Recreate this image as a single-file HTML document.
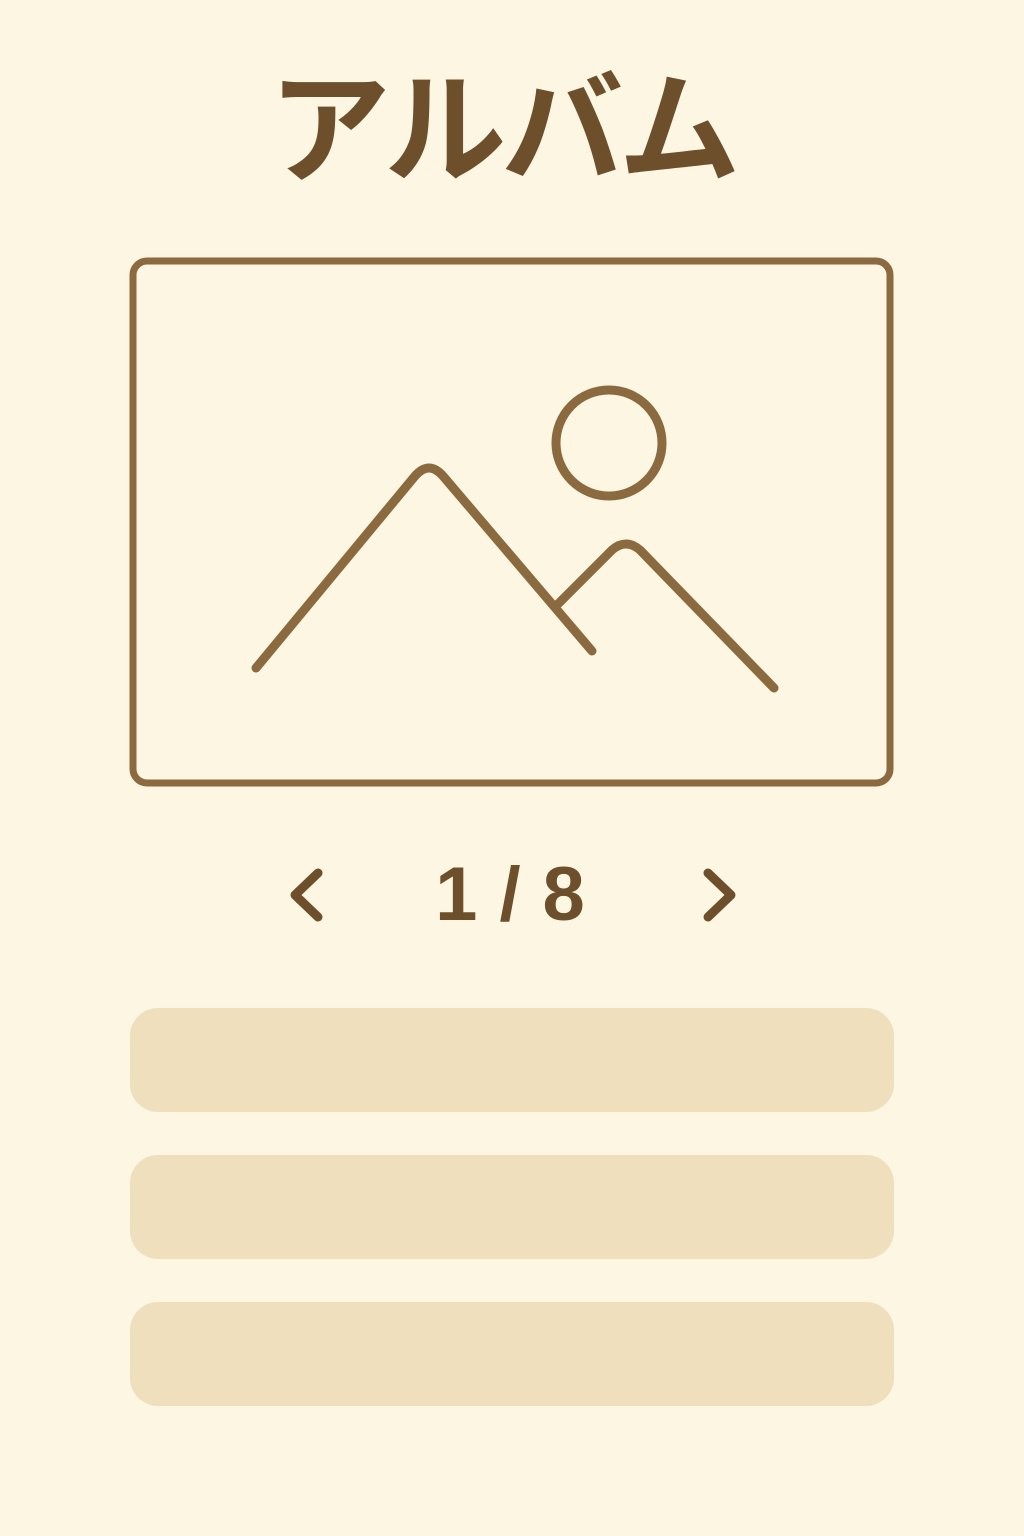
<!DOCTYPE html>
<html><head><meta charset="utf-8"><style>
html,body{margin:0;padding:0;}
body{width:1024px;height:1536px;background:#fdf6e2;position:relative;overflow:hidden;font-family:"Liberation Sans","Noto Sans CJK JP",sans-serif;}
.title{position:absolute;left:-10px;width:1024px;top:66px;text-align:center;font-size:122px;font-weight:bold;color:#6d4f2c;letter-spacing:-5px;line-height:130px;}
.bar{position:absolute;left:130px;width:764px;height:104px;border-radius:28px;background:#efdfbd;}
.pager{position:absolute;left:395px;width:230px;top:850px;text-align:center;font-size:76px;font-weight:bold;color:#6d4f2c;line-height:90px;letter-spacing:22px;padding-left:22px;box-sizing:border-box;}
</style></head><body>
<div class="title">アルバム</div>
<svg width="1024" height="1000" style="position:absolute;left:0;top:0" fill="none" stroke="#8b6a40" stroke-linecap="round" stroke-linejoin="round">
<rect x="133" y="261" width="757" height="522" rx="14" stroke-width="7"/>
<circle cx="609" cy="443" r="53" stroke-width="9"/>
<path d="M256 668 L415 476 Q429 460 443 476 L592 651" stroke-width="9"/>
<path d="M558 604 L612 550 Q626 538 640 550 L774 688" stroke-width="9"/>
<path d="M318 873 L295 895 L318 917" stroke="#6d4f2c" stroke-width="9"/>
<path d="M708 873 L731 895 L708 917" stroke="#6d4f2c" stroke-width="9"/>
</svg>
<div class="pager">1/8</div>
<div class="bar" style="top:1008px"></div>
<div class="bar" style="top:1155px"></div>
<div class="bar" style="top:1302px"></div>
</body></html>
